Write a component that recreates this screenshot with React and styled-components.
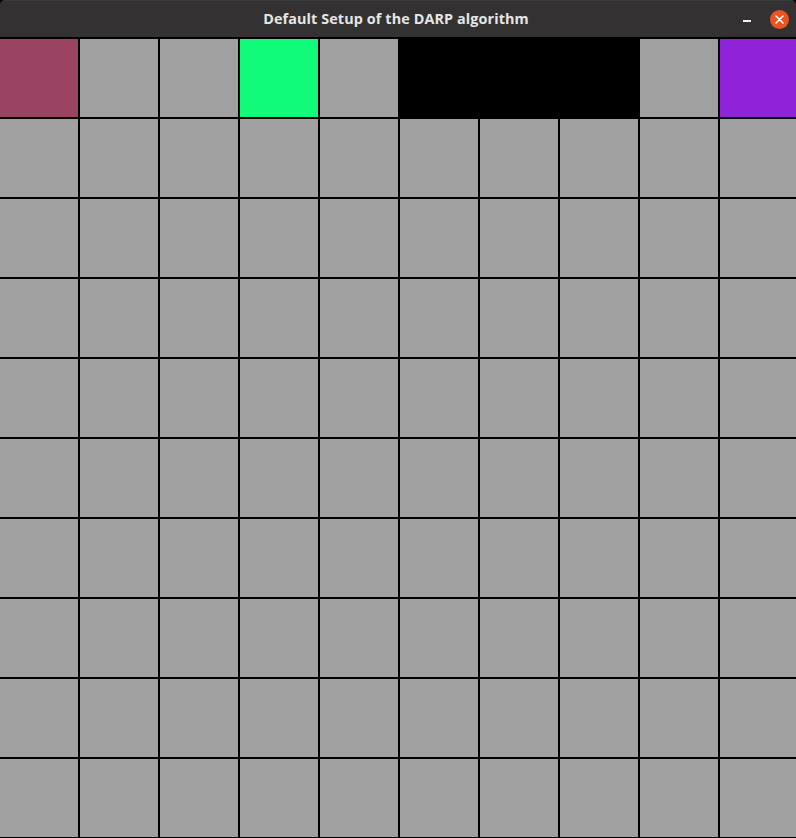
import React from "react";
import styled, { createGlobalStyle } from "styled-components";

const Global = createGlobalStyle`
  html, body { margin: 0; padding: 0; background: #000; overflow: hidden; }
  #root { width: 796px; height: 838px; overflow: hidden; }
`;

const Window = styled.div`
  width: 796px;
  height: 838px;
  display: flex;
  flex-direction: column;
  background: #000;
  overflow: hidden;
`;

const TitleBar = styled.div`
  flex: 0 0 37px;
  height: 37px;
  box-sizing: border-box;
  border-top: 1px solid #3d3b3b;
  border-radius: 5px 5px 0 0;
  background: #333131;
  position: relative;
  display: flex;
  align-items: center;
  justify-content: center;
`;

const Title = styled.div`
  font-family: "Open Sans", "Noto Sans", "DejaVu Sans", sans-serif;
  font-weight: 700;
  font-size: 14.4px;
  color: #e6e6e6;
  letter-spacing: 0.1px;
  margin-top: -1px;
  margin-left: -4px;
`;

const Controls = styled.div`
  position: absolute;
  right: 7px;
  top: 0;
  height: 36px;
  display: flex;
  align-items: center;
  gap: 19px;
`;

const Minimize = styled.div`
  width: 8px;
  height: 1.5px;
  background: #f2f2f2;
  margin-top: 4px;
`;

const Close = styled.div`
  width: 19px;
  height: 19px;
  border-radius: 50%;
  background: #e95420;
  display: flex;
  align-items: center;
  justify-content: center;
`;

const Grid = styled.div`
  flex: 0 0 auto;
  display: grid;
  grid-template-columns: repeat(10, 78px);
  grid-auto-rows: 78px;
  gap: 2px;
  padding-top: 2px;
  background: #000;
`;

const Cell = styled.div`
  background: ${(p) => p.$color || "#a0a0a0"};
`;

const special = {
  0: "#9a4362",
  3: "#10fb7a",
  5: "#000",
  6: "#000",
  7: "#000",
  9: "#9022d8",
};

export default function App() {
  const cells = [];
  for (let r = 0; r < 10; r++) {
    for (let c = 0; c < 10; c++) {
      cells.push(<Cell key={`${r}-${c}`} $color={r === 0 ? special[c] : undefined} />);
    }
  }
  return (
    <>
      <Global />
      <Window>
        <TitleBar>
          <Title>Default Setup of the DARP algorithm</Title>
          <Controls>
            <Minimize />
            <Close>
              <svg width="9" height="9" viewBox="0 0 9 9">
                <path d="M1 1L8 8M8 1L1 8" stroke="#fff" strokeWidth="1.5" strokeLinecap="round" />
              </svg>
            </Close>
          </Controls>
        </TitleBar>
        <Grid>{cells}</Grid>
      </Window>
    </>
  );
}
